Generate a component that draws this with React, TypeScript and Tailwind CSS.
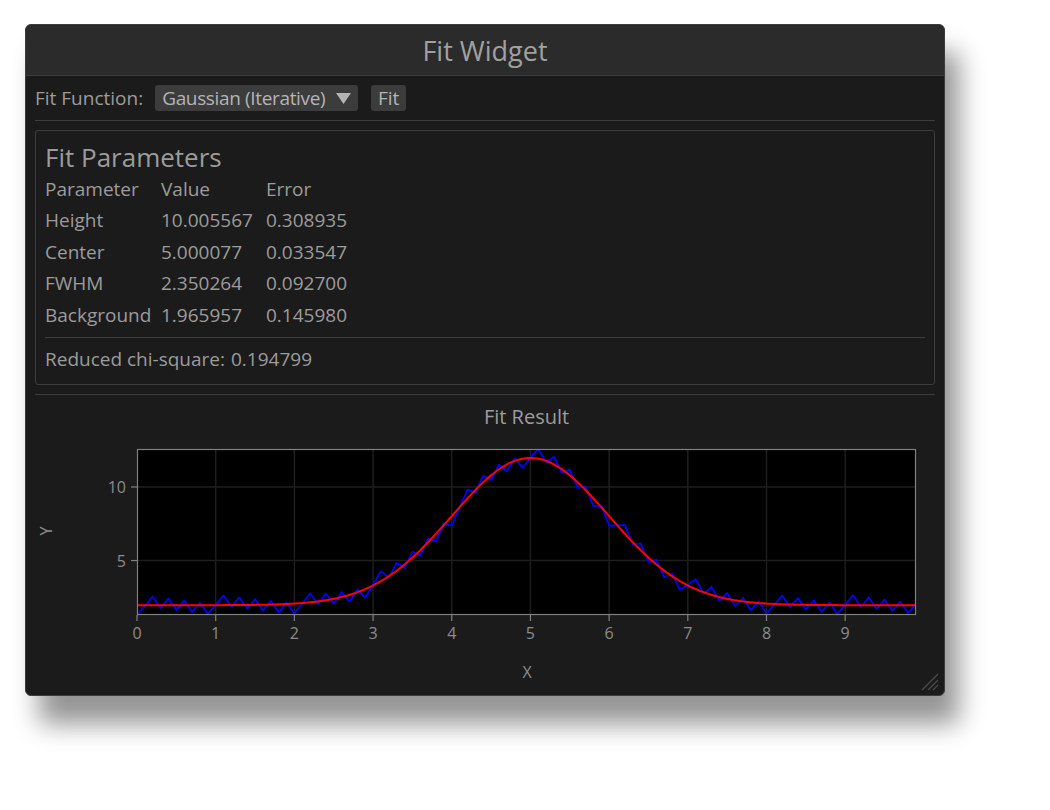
import React from "react";

const FONT = '"Open Sans", "Noto Sans", "DejaVu Sans", sans-serif';

const X0 = 137;
const X1 = 916;
const Y0 = 449;
const Y1 = 615;
const XMAX = 9.9;

const data = Array.from({ length: 100 }, (_, i) => {
  const x = i * 0.1;
  const noise = (((i * 9) % 20) / 20 - 0.5) * 1.4;
  const y = 2 + 10 * Math.exp(-((x - 5) ** 2) / 2) + noise;
  return [x, y] as [number, number];
});
const YMIN = Math.min(...data.map((d) => d[1]));
const YMAX = Math.max(...data.map((d) => d[1]));

const px = (x: number) => X0 + (x / XMAX) * (X1 - X0);
const py = (y: number) => Y1 - ((y - YMIN) / (YMAX - YMIN)) * (Y1 - Y0);

const fit = (x: number) =>
  1.965957 +
  10.005567 *
    Math.exp((-4 * Math.LN2 * (x - 5.000077) ** 2) / (2.350264 * 2.350264));

const dataPath = data
  .map(([x, y], i) => `${i === 0 ? "M" : "L"}${px(x).toFixed(2)},${py(y).toFixed(2)}`)
  .join(" ");
const fitPath = Array.from({ length: 301 }, (_, i) => {
  const x = (i / 300) * XMAX;
  return `${i === 0 ? "M" : "L"}${px(x).toFixed(2)},${py(fit(x)).toFixed(2)}`;
}).join(" ");

const rows: [string, string, string][] = [
  ["Height", "10.005567", "0.308935"],
  ["Center", "5.000077", "0.033547"],
  ["FWHM", "2.350264", "0.092700"],
  ["Background", "1.965957", "0.145980"],
];

function Plot() {
  const xs = [0, 1, 2, 3, 4, 5, 6, 7, 8, 9];
  const ys = [5, 10];
  return (
    <svg width={900} height={255} viewBox="35 431 900 255" className="block">
      <defs>
        <clipPath id="plotclip">
          <rect x={X0} y={Y0} width={X1 - X0} height={Y1 - Y0} />
        </clipPath>
      </defs>
      <rect x={X0} y={Y0} width={X1 - X0} height={Y1 - Y0} fill="#000" />
      {xs.slice(1).map((x) => (
        <line key={"gx" + x} x1={px(x)} x2={px(x)} y1={Y0} y2={Y1} stroke="#1e1e1e" strokeWidth={1.5} />
      ))}
      {ys.map((y) => (
        <line key={"gy" + y} x1={X0} x2={X1} y1={py(y)} y2={py(y)} stroke="#1e1e1e" strokeWidth={1.5} />
      ))}
      <g clipPath="url(#plotclip)">
        <path d={dataPath} fill="none" stroke="#0000ff" strokeWidth={1.8} strokeLinejoin="round" />
        <path d={fitPath} fill="none" stroke="#ff0000" strokeWidth={2} strokeLinejoin="round" />
      </g>
      <rect x={X0 + 0.5} y={Y0 + 0.5} width={X1 - X0 - 1} height={Y1 - Y0 - 1} fill="none" stroke="#808080" strokeWidth={1.2} />
      {xs.map((x) => (
        <g key={"tx" + x}>
          <line x1={px(x)} x2={px(x)} y1={Y1} y2={Y1 + 6} stroke="#808080" strokeWidth={1.2} />
          <text x={px(x)} y={639} textAnchor="middle" fontSize={16} fill="#8c8c8c" fontFamily={FONT}>
            {x}
          </text>
        </g>
      ))}
      {ys.map((y) => (
        <g key={"ty" + y}>
          <line x1={X0 - 6} x2={X0} y1={py(y)} y2={py(y)} stroke="#808080" strokeWidth={1.2} />
          <text x={126} y={py(y) + 6} textAnchor="end" fontSize={16} fill="#8c8c8c" fontFamily={FONT}>
            {y}
          </text>
        </g>
      ))}
      <text x={527} y={678} textAnchor="middle" fontSize={16} fill="#8c8c8c" fontFamily={FONT}>
        X
      </text>
      <text
        x={0}
        y={0}
        transform="translate(52 531) rotate(-90)"
        textAnchor="middle"
        fontSize={16}
        fill="#8c8c8c"
        fontFamily={FONT}
      >
        Y
      </text>
    </svg>
  );
}

export default function App() {
  return (
    <div className="w-[1050px] h-[810px] bg-white pl-[25px] pt-[24px]" style={{ fontFamily: FONT }}>
      <div className="relative w-[920px] h-[672px] rounded-[6px] border border-[#3c3c3c] bg-[#1b1b1b] shadow-[14px_28px_26px_rgba(0,0,0,0.42)] flex flex-col overflow-hidden">
        <div className="h-[51px] shrink-0 bg-[#2b2b2b] border-b border-[#3c3c3c] flex items-center justify-center text-[27px] text-[#a0a0a0] leading-none">
          Fit Widget
        </div>
        <div className="flex flex-col px-[9px] pt-[9px] text-[19px] text-[#9c9c9c]">
          <div className="flex items-center h-[26px]">
            <span className="leading-[26px]">Fit Function:</span>
            <div className="ml-[12px] h-[26px] w-[203px] rounded-[3px] bg-[#3c3c3c] pl-[7px] flex items-center text-[#b4b4b4]">
              <span className="leading-[26px] tracking-[-0.35px]">Gaussian (Iterative)</span>
              <svg width={15} height={11} viewBox="0 0 15 11" className="ml-auto mr-[7px]">
                <polygon points="0,0 15,0 7.5,11" fill="#b4b4b4" />
              </svg>
            </div>
            <div className="ml-[13px] h-[26px] w-[35px] rounded-[3px] bg-[#3c3c3c] flex items-center justify-center text-[#b4b4b4]">
              <span className="leading-[26px]">Fit</span>
            </div>
          </div>
          <div className="mt-[9px] h-px bg-[#3c3c3c]" />
          <div className="mt-[9px] h-[255px] border border-[#3c3c3c] rounded-[3px] px-[9px] flex flex-col">
            <div className="mt-[10px] h-[32px] leading-[32px] text-[26px]">Fit Parameters</div>
            <div className="flex h-[31.5px] items-center">
              <span className="w-[116px]">Parameter</span>
              <span className="w-[105px]">Value</span>
              <span>Error</span>
            </div>
            {rows.map((r) => (
              <div key={r[0]} className="flex h-[31.5px] items-center">
                <span className="w-[116px]">{r[0]}</span>
                <span className="w-[105px]">{r[1]}</span>
                <span>{r[2]}</span>
              </div>
            ))}
            <div className="mt-[6px] h-px bg-[#3c3c3c]" />
            <div className="mt-[6px] flex h-[31.5px] items-center">
              <span className="w-[186px]">Reduced chi-square:</span>
              <span>0.194799</span>
            </div>
          </div>
          <div className="mt-[9px] h-px bg-[#3c3c3c]" />
          <div className="mt-[8px] ml-[102px] w-[779px] h-[28px] leading-[28px] text-center text-[20px]">
            Fit Result
          </div>
          <Plot />
        </div>
        <svg width={20} height={20} viewBox="0 0 20 20" className="absolute right-[3px] bottom-[3px]">
          <line x1={17} y1={2} x2={1} y2={18} stroke="#4a4a4a" strokeWidth={1.3} />
          <line x1={17} y1={8} x2={7} y2={18} stroke="#4a4a4a" strokeWidth={1.3} />
          <line x1={17} y1={13} x2={12} y2={18} stroke="#4a4a4a" strokeWidth={1.3} />
        </svg>
      </div>
    </div>
  );
}
